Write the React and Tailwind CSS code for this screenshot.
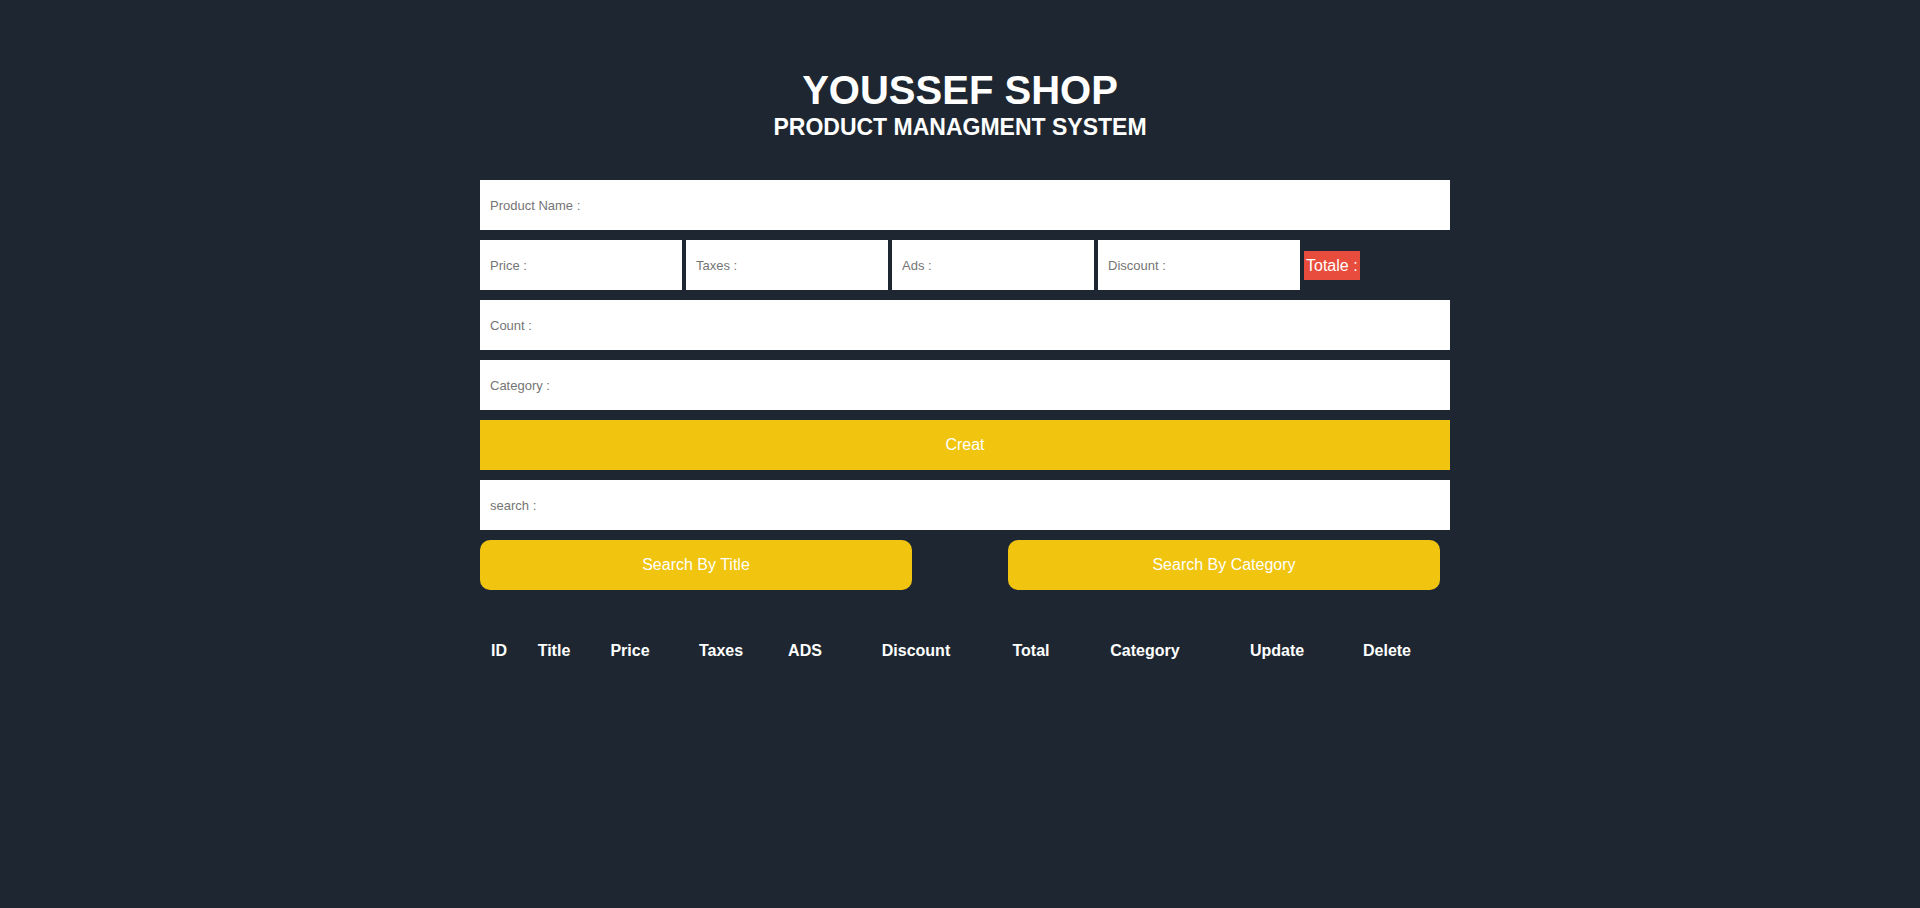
import { useState } from 'react'

/* Product manager — header, create form, search, and the empty products table. */

const COLUMNS = [
  { label: 'ID', w: 'w-[38px]' },
  { label: 'Title', w: 'w-[72px]' },
  { label: 'Price', w: 'w-[80px]' },
  { label: 'Taxes', w: 'w-[102px]' },
  { label: 'ADS', w: 'w-[66px]' },
  { label: 'Discount', w: 'w-[156px]' },
  { label: 'Total', w: 'w-[74px]' },
  { label: 'Category', w: 'w-[154px]' },
  { label: 'Update', w: 'w-[110px]' },
  { label: 'Delete', w: 'w-[110px]' },
]

const inputCls =
  'h-[50px] bg-white px-[10px] text-[13px] text-black outline-none placeholder:text-[#757575]'

export default function App() {
  const [form, setForm] = useState({ title: '', price: '', taxes: '', ads: '', discount: '', count: '', category: '' })
  const [search, setSearch] = useState('')
  const set = (k) => (e) => setForm({ ...form, [k]: e.target.value })

  return (
    <div className="min-h-screen bg-[#1e2731] pt-[67px] font-['Liberation_Sans',Arial,sans-serif] text-white">
      <header className="text-center">
        <h1 className="text-[40px] font-bold leading-[46px]">YOUSSEF SHOP</h1>
        <h2 className="text-[23px] font-bold leading-[28px]">PRODUCT MANAGMENT SYSTEM</h2>
      </header>

      <main className="mx-auto mt-[39px] w-[970px] translate-x-[5px]">
        <div className="flex flex-col gap-[10px]">
          <input className={inputCls} placeholder="Product Name :" value={form.title} onChange={set('title')} />

          <div className="flex items-center gap-[4px]">
            <input className={`${inputCls} w-[202px]`} placeholder="Price :" value={form.price} onChange={set('price')} />
            <input className={`${inputCls} w-[202px]`} placeholder="Taxes :" value={form.taxes} onChange={set('taxes')} />
            <input className={`${inputCls} w-[202px]`} placeholder="Ads :" value={form.ads} onChange={set('ads')} />
            <input className={`${inputCls} w-[202px]`} placeholder="Discount :" value={form.discount} onChange={set('discount')} />
            <small className="bg-[#e74c3c] px-[2px] py-[5px] text-[16px] leading-[19px]">Totale :</small>
          </div>

          <input className={inputCls} placeholder="Count :" value={form.count} onChange={set('count')} />
          <input className={inputCls} placeholder="Category :" value={form.category} onChange={set('category')} />

          <button className="h-[50px] bg-[#f1c40f] text-[16px] text-white">Creat</button>

          <input className={inputCls} placeholder="search :" value={search} onChange={(e) => setSearch(e.target.value)} />

          <div className="flex gap-[96px]">
            <button className="h-[50px] w-[432px] rounded-[10px] bg-[#f1c40f] text-[16px] text-white">Search By Title</button>
            <button className="h-[50px] w-[432px] rounded-[10px] bg-[#f1c40f] text-[16px] text-white">Search By Category</button>
          </div>
        </div>

        <table className="mt-[41px] table-fixed">
          <thead>
            <tr>
              {COLUMNS.map((c) => (
                <th key={c.label} className={`${c.w} py-[10px] text-center text-[16px] font-bold leading-[20px]`}>
                  {c.label}
                </th>
              ))}
            </tr>
          </thead>
          <tbody />
        </table>
      </main>
    </div>
  )
}
